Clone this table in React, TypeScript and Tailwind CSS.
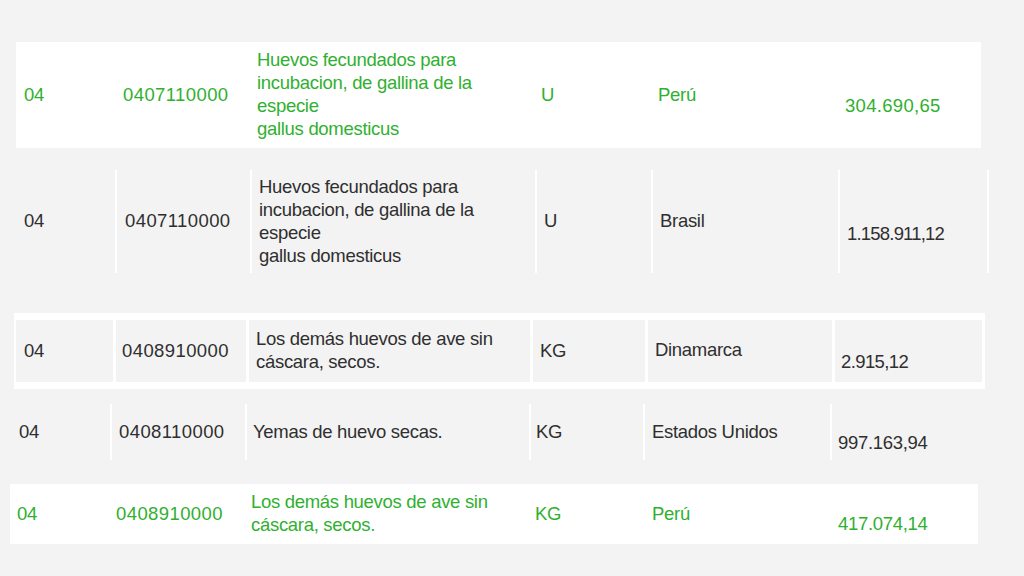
const GREEN = 'text-[#30b030]'
const DARK = 'text-[#2f2f2f]'

type RowData = {
  chapter: string
  code: string
  desc: string[]
  unit: string
  country: string
  value: string
}

const ROWS: RowData[] = [
  { chapter: '04', code: '0407110000', desc: ['Huevos fecundados para', 'incubacion, de gallina de la', 'especie', 'gallus domesticus'], unit: 'U', country: 'Perú', value: '304.690,65' },
  { chapter: '04', code: '0407110000', desc: ['Huevos fecundados para', 'incubacion, de gallina de la', 'especie', 'gallus domesticus'], unit: 'U', country: 'Brasil', value: '1.158.911,12' },
  { chapter: '04', code: '0408910000', desc: ['Los demás huevos de ave sin', 'cáscara, secos.'], unit: 'KG', country: 'Dinamarca', value: '2.915,12' },
  { chapter: '04', code: '0408110000', desc: ['Yemas de huevo secas.'], unit: 'KG', country: 'Estados Unidos', value: '997.163,94' },
  { chapter: '04', code: '0408910000', desc: ['Los demás huevos de ave sin', 'cáscara, secos.'], unit: 'KG', country: 'Perú', value: '417.074,14' },
]

function Desc({ lines }: { lines: string[] }) {
  return (
    <div className="flex flex-col">
      {lines.map(l => <span key={l}>{l}</span>)}
    </div>
  )
}

export default function App() {
  const [r1, r2, r3, r4, r5] = ROWS
  return (
    <div
      className="w-[1024px] h-[576px] bg-[#f3f3f3] overflow-hidden flex flex-col text-[18.5px] leading-[23px] tracking-[-0.3px]"
      style={{ fontFamily: "'Liberation Sans', Arial, sans-serif" }}
    >
      {/* Row 1 — highlighted */}
      <div className={`mt-[42px] ml-[16px] w-[965px] h-[106px] pb-[2px] bg-white flex items-center ${GREEN}`}>
        <div className="w-[99px] pl-[8px]">{r1.chapter}</div>
        <div className="w-[134px] pl-[8px] tracking-[0.4px]">{r1.code}</div>
        <div className="w-[284px] pl-[8px]"><Desc lines={r1.desc} /></div>
        <div className="w-[117px] pl-[8px]">{r1.unit}</div>
        <div className="w-[187px] pl-[8px]">{r1.country}</div>
        <div className="w-[144px] pl-[8px] pt-[22px] tracking-[0.3px]">{r1.value}</div>
      </div>

      {/* Row 2 */}
      <div className={`mt-[22px] ml-[16px] h-[103px] flex ${DARK}`}>
        <div className="w-[99px] pl-[8px] pb-[2px] flex items-center">{r2.chapter}</div>
        <div className="w-[135px] pl-[8px] pb-[2px] border-l-2 border-white flex items-center tracking-[0.4px]">{r2.code}</div>
        <div className="w-[285px] pl-[7px] pb-[2px] border-l-2 border-white flex items-center"><Desc lines={r2.desc} /></div>
        <div className="w-[116px] pl-[7px] pb-[2px] border-l-2 border-white flex items-center">{r2.unit}</div>
        <div className="w-[187px] pl-[7px] pb-[2px] border-l-2 border-white flex items-center">{r2.country}</div>
        <div className="w-[151px] pl-[7px] pt-[24px] border-l-2 border-r-2 border-white flex items-center tracking-[-0.8px]">{r2.value}</div>
      </div>

      {/* Row 3 — boxed cells */}
      <div className={`mt-[40px] ml-[14px] w-[971px] h-[76px] bg-white flex gap-[3px] pl-[2px] pr-[3px] py-[7px] ${DARK}`}>
        <div className="w-[97px] pl-[8px] pb-[2px] bg-[#f3f3f3] flex items-center">{r3.chapter}</div>
        <div className="w-[130px] pl-[6px] pb-[2px] bg-[#f3f3f3] flex items-center tracking-[0.4px]">{r3.code}</div>
        <div className="w-[281px] pl-[7px] pb-[2px] bg-[#f3f3f3] flex items-center"><Desc lines={r3.desc} /></div>
        <div className="w-[112px] pl-[7px] pb-[2px] bg-[#f3f3f3] flex items-center">{r3.unit}</div>
        <div className="w-[184px] pl-[7px] pb-[4px] bg-[#f3f3f3] flex items-center">{r3.country}</div>
        <div className="flex-1 pl-[6px] pt-[20px] bg-[#f3f3f3] flex items-center tracking-[-0.6px]">{r3.value}</div>
      </div>

      {/* Row 4 */}
      <div className={`mt-[15px] ml-[11px] h-[56px] flex ${DARK}`}>
        <div className="w-[99px] pl-[8px] pb-[2px] flex items-center">{r4.chapter}</div>
        <div className="w-[135px] pl-[7px] pb-[2px] border-l-2 border-white flex items-center tracking-[0.4px]">{r4.code}</div>
        <div className="w-[284px] pl-[6px] pb-[2px] border-l-2 border-white flex items-center">{r4.desc[0]}</div>
        <div className="w-[114px] pl-[5px] pb-[2px] border-l-2 border-white flex items-center">{r4.unit}</div>
        <div className="w-[187px] pl-[7px] pb-[2px] border-l-2 border-white flex items-center">{r4.country}</div>
        <div className="w-[150px] pl-[6px] pt-[20px] border-l-2 border-white flex items-center tracking-[-0.3px]">{r4.value}</div>
      </div>

      {/* Row 5 — highlighted */}
      <div className={`mt-[24px] ml-[10px] w-[968px] h-[60px] pb-[2px] bg-white flex items-center ${GREEN}`}>
        <div className="w-[99px] pl-[7px]">{r5.chapter}</div>
        <div className="w-[135px] pl-[7px] tracking-[0.4px]">{r5.code}</div>
        <div className="w-[285px] pl-[7px]"><Desc lines={r5.desc} /></div>
        <div className="w-[116px] pl-[6px]">{r5.unit}</div>
        <div className="w-[186px] pl-[7px]">{r5.country}</div>
        <div className="w-[140px] pl-[7px] pt-[20px] tracking-[-0.3px]">{r5.value}</div>
      </div>
    </div>
  )
}
